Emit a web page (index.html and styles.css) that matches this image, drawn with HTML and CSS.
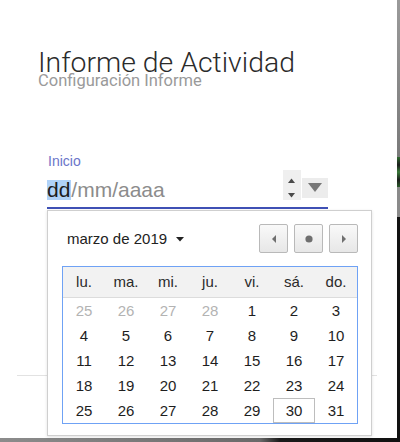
FILE: index.html
```html
<!DOCTYPE html>
<html lang="es">
<head>
<meta charset="utf-8">
<title>Informe de Actividad</title>
<link rel="stylesheet" href="styles.css">
</head>
<body>
<div class="screen">
  <div class="dialog">
    <header class="head">
      <h1 class="title">Informe de Actividad</h1>
      <p class="subtitle">Configuración Informe</p>
    </header>
    <div class="field">
      <label class="label">Inicio</label>
      <div class="input">
        <span class="value"><span class="seg-active">dd</span><span class="seg">/mm/aaaa</span></span>
        <span class="spin">
          <svg width="18" height="30" viewBox="0 0 18 30"><polygon points="5,13 12,13 8.5,8.5" fill="#4a4a4a"/><polygon points="5,23 12,23 8.5,27.5" fill="#4a4a4a"/></svg>
        </span>
        <span class="drop">
          <svg width="26" height="20" viewBox="0 0 26 20"><polygon points="6,5 20,5 13,14" fill="#787878"/></svg>
        </span>
      </div>
      <div class="picker">
        <div class="picker-head">
          <span class="month">marzo de 2019<svg class="caret" width="8" height="5" viewBox="0 0 8 5"><polygon points="0,0 8,0 4,4.5" fill="#222"/></svg></span>
          <div class="nav">
            <button class="nav-btn" type="button"><svg width="6" height="8" viewBox="0 0 6 8"><polygon points="5,0 5,8 1,4" fill="#6f6f6f"/></svg></button>
            <button class="nav-btn" type="button"><svg width="8" height="8" viewBox="0 0 8 8"><circle cx="4" cy="4" r="3.6" fill="#6f6f6f"/></svg></button>
            <button class="nav-btn" type="button"><svg width="6" height="8" viewBox="0 0 6 8"><polygon points="1,0 1,8 5,4" fill="#6f6f6f"/></svg></button>
          </div>
        </div>
        <table class="cal">
          <thead>
            <tr><th>lu.</th><th>ma.</th><th>mi.</th><th>ju.</th><th>vi.</th><th>sá.</th><th>do.</th></tr>
          </thead>
          <tbody>
            <tr><td class="other">25</td><td class="other">26</td><td class="other">27</td><td class="other">28</td><td>1</td><td>2</td><td>3</td></tr>
            <tr><td>4</td><td>5</td><td>6</td><td>7</td><td>8</td><td>9</td><td>10</td></tr>
            <tr><td>11</td><td>12</td><td>13</td><td>14</td><td>15</td><td>16</td><td>17</td></tr>
            <tr><td>18</td><td>19</td><td>20</td><td>21</td><td>22</td><td>23</td><td>24</td></tr>
            <tr><td>25</td><td>26</td><td>27</td><td>28</td><td>29</td><td class="today">30</td><td>31</td></tr>
          </tbody>
        </table>
      </div>
    </div>
    <div class="divider"></div>
  </div>
  <div class="edge"></div>
</div>
<div class="bottom-edge"></div>
</body>
</html>
```
FILE: styles.css
```css
html, body {
  margin: 0;
  padding: 0;
  background: #ffffff;
  overflow: hidden;
}

.screen {
  display: flex;
  width: 400px;
  height: 438px;
}

.dialog {
  width: 397px;
  height: 438px;
  background: #ffffff;
  padding: 51px 0 0 17px;
  box-sizing: border-box;
}

.edge {
  width: 3px;
  height: 438px;
  background: linear-gradient(to bottom,
    #9a9a9a 0, #7a7a7a 157px,
    #2f6a2f 157px, #1b1b1b 165px, #3a7a3a 172px, #1b1b1b 180px, #2a5a2a 187px,
    #8a8a8a 187px, #8a8a8a 217px,
    #111111 217px, #111111 100%);
}

.bottom-edge {
  width: 400px;
  height: 4px;
  background: linear-gradient(to right, #8c8c8c 0, #6a6a6a 260px, #1a1a1a 280px, #111 100%);
}

.head {
  padding-left: 21px;
}

.title {
  margin: 0;
  font-family: Roboto, "Liberation Sans", sans-serif;
  font-weight: 300;
  font-size: 28.4px;
  line-height: 24px;
  color: #2b2b2b;
}

.subtitle {
  margin: 0;
  font-family: Roboto, "Liberation Sans", sans-serif;
  font-weight: 400;
  font-size: 16.5px;
  line-height: 12px;
  color: #9a9a9a;
}

.field {
  position: relative;
  margin: 66px 0 0 30px;
  width: 281px;
}

.label {
  display: block;
  padding-left: 1px;
  font-family: "Liberation Sans", Arial, sans-serif;
  font-size: 14px;
  line-height: 16px;
  color: #6b75c9;
}

.input {
  margin-top: 1px;
  height: 37px;
  display: flex;
  align-items: flex-start;
  border-bottom: 2px solid #3f51b5;
}

.value {
  margin-top: 10px;
  font-family: "Liberation Sans", Arial, sans-serif;
  font-size: 21px;
  line-height: 20px;
  white-space: nowrap;
}

.seg-active {
  display: inline-block;
  background: #b0d2f8;
  color: #1c1c1c;
  padding: 0 1px 0 0;
}

.seg {
  color: #8c8c8c;
}

.spin {
  margin-left: auto;
  width: 18px;
  height: 30px;
  background: #efefef;
  display: flex;
}

.drop {
  margin-top: 8px;
  margin-left: 1px;
  width: 26px;
  height: 20px;
  background: #ececec;
  display: flex;
}

.picker {
  position: absolute;
  left: 0;
  top: calc(100% + 1px);
  width: 325px;
  box-sizing: border-box;
  background: #ffffff;
  border: 1px solid #cfcfcf;
  box-shadow: 0 1px 3px rgba(0, 0, 0, 0.12);
  padding: 13px 13px 11px 14px;
}

.picker-head {
  display: flex;
  align-items: center;
  height: 29px;
}

.month {
  padding-left: 5px;
  font-family: "Liberation Sans", Arial, sans-serif;
  font-size: 15px;
  line-height: 17px;
  color: #222;
  display: flex;
  align-items: center;
}

.caret {
  margin-left: 9px;
  margin-top: 1px;
}

.nav {
  margin-left: auto;
  display: flex;
  gap: 6px;
}

.nav-btn {
  width: 29px;
  height: 29px;
  box-sizing: border-box;
  padding: 0;
  border: 1px solid #b9b9b9;
  border-radius: 2px;
  background: linear-gradient(to bottom, #f9f9f9, #e7e7e7);
  display: flex;
  align-items: center;
  justify-content: center;
}

.cal {
  margin-top: 13px;
  width: 296px;
  border: 1px solid #6fa2f5;
  border-collapse: separate;
  border-spacing: 0;
  table-layout: fixed;
  font-family: "Liberation Sans", Arial, sans-serif;
  font-size: 15px;
}

.cal th {
  height: 30px;
  padding: 0;
  background: #f2f2f2;
  border-bottom: 1px solid #dcdcdc;
  font-weight: 400;
  color: #2a2a2a;
  line-height: 30px;
  text-align: center;
}

.cal td {
  height: 25px;
  padding: 0;
  line-height: 25px;
  text-align: center;
  color: #1e1e1e;
}

.cal td.other {
  color: #b3b3b3;
}

.cal td.today {
  box-shadow: inset 0 0 0 1px #bdbdbd;
}

.divider {
  margin-top: 166px;
  width: 360px;
  height: 1px;
  background: #e2e2e2;
}
```
